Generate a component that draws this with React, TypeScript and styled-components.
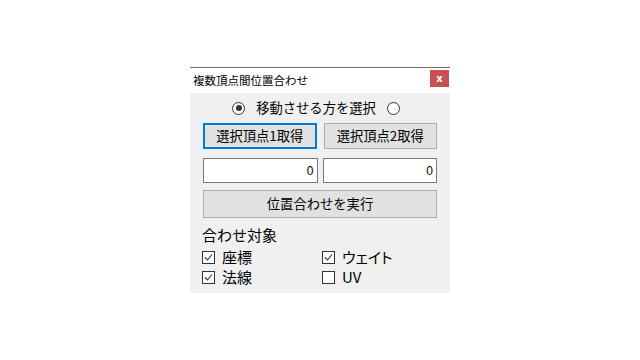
import React from 'react';
import styled, { createGlobalStyle } from 'styled-components';

const GlobalStyle = createGlobalStyle`
  html, body {
    margin: 0;
    padding: 0;
    background: #ffffff;
  }
  #root {
    height: 100vh;
    display: flex;
    align-items: center;
    justify-content: center;
  }
`;

const font = `"Noto Sans CJK JP", "Noto Sans", sans-serif`;

const Window = styled.div`
  width: 260px;
  border-top: 1px solid #6e6e6e;
  font-family: ${font};
  color: #000;
`;

const TitleBar = styled.div`
  height: 25px;
  background: #ffffff;
  display: flex;
  align-items: flex-start;
  justify-content: space-between;
`;

const Title = styled.span`
  font-size: 11.5px;
  line-height: 14px;
  margin: 5px 0 0 3px;
`;

const CloseButton = styled.button`
  width: 19px;
  height: 17px;
  margin: 2px 1px 0 0;
  padding: 0;
  border: none;
  background: #c75050;
  color: #fff;
  font-family: "DejaVu Sans", sans-serif;
  font-size: 10px;
  font-weight: bold;
  line-height: 17px;
`;

const Body = styled.div`
  background: #f0f0f0;
  padding: 7px 13px 7px 13px;
  display: flex;
  flex-direction: column;
`;

const RadioRow = styled.div`
  height: 16px;
  display: flex;
  align-items: center;
  justify-content: center;
  gap: 11px;
  margin-left: -8px;
  font-size: 13.3px;
  line-height: 16px;
`;

const Radio = styled.span<{ checked?: boolean }>`
  width: 11px;
  height: 11px;
  border: 1px solid #333;
  border-radius: 50%;
  background: #fff;
  display: flex;
  align-items: center;
  justify-content: center;
  &::after {
    content: '';
    width: 6px;
    height: 6px;
    border-radius: 50%;
    background: ${({ checked }) => (checked ? '#333' : 'transparent')};
  }
`;

const Pair = styled.div<{ top: number; gap: number }>`
  margin-top: ${({ top }) => top}px;
  display: grid;
  grid-template-columns: 1fr 1fr;
  column-gap: ${({ gap }) => gap}px;
`;

const Button = styled.button<{ focused?: boolean; height?: number }>`
  height: ${({ height }) => height || 26}px;
  margin: 0;
  padding: 0;
  background: #e1e1e1;
  border: ${({ focused }) => (focused ? '2px solid #0078d7' : '1px solid #adadad')};
  font-family: ${font};
  font-size: 13.3px;
  color: #000;
  line-height: 16px;
`;

const WideButton = styled(Button)`
  margin-top: 7px;
  width: 100%;
`;

const TextBox = styled.div`
  height: 25px;
  box-sizing: border-box;
  background: #fff;
  border: 1px solid #7a7a7a;
  display: flex;
  align-items: center;
  justify-content: flex-end;
  padding-right: 3px;
  font-family: "Liberation Sans", sans-serif;
  font-size: 12px;
`;

const SectionLabel = styled.div`
  margin-top: 8px;
  height: 18px;
  font-size: 15px;
  line-height: 18px;
  margin-left: -1px;
`;

const CheckGrid = styled.div`
  margin-top: 4px;
  display: grid;
  grid-template-columns: 120px 1fr;
  row-gap: 2px;
  margin-left: -1px;
`;

const CheckItem = styled.label`
  height: 18px;
  display: flex;
  align-items: center;
  gap: 7px;
  font-size: 15px;
  line-height: 18px;
  font-feature-settings: "palt";
`;

const Box = styled.span`
  width: 11px;
  height: 11px;
  border: 1px solid #333;
  background: #fff;
  display: flex;
  align-items: center;
  justify-content: center;
`;

const Check = ({ checked, label }: { checked: boolean; label: string }) => (
  <CheckItem>
    <Box>
      {checked && (
        <svg width="9" height="9" viewBox="0 0 9 9">
          <path d="M1 4.5 L3.5 7 L8 1.5" fill="none" stroke="#333" strokeWidth="1.1" />
        </svg>
      )}
    </Box>
    {label}
  </CheckItem>
);

const App = () => (
  <>
    <GlobalStyle />
    <Window>
      <TitleBar>
        <Title>複数頂点間位置合わせ</Title>
        <CloseButton>x</CloseButton>
      </TitleBar>
      <Body>
        <RadioRow>
          <Radio checked />
          <span>移動させる方を選択</span>
          <Radio />
        </RadioRow>
        <Pair top={7} gap={7}>
          <Button focused>選択頂点1取得</Button>
          <Button>選択頂点2取得</Button>
        </Pair>
        <Pair top={9} gap={5}>
          <TextBox>0</TextBox>
          <TextBox>0</TextBox>
        </Pair>
        <WideButton height={28}>位置合わせを実行</WideButton>
        <SectionLabel>合わせ対象</SectionLabel>
        <CheckGrid>
          <Check checked label="座標" />
          <Check checked label="ウェイト" />
          <Check checked label="法線" />
          <Check checked={false} label="UV" />
        </CheckGrid>
      </Body>
    </Window>
  </>
);

export default App;
